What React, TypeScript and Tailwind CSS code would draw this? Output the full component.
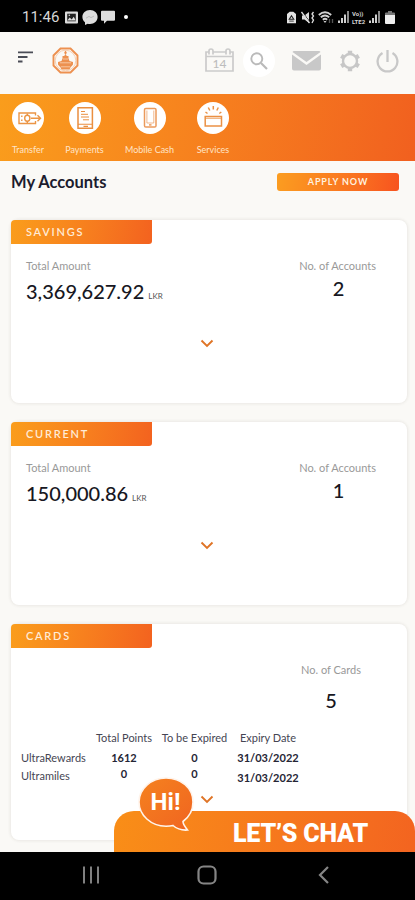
import type { ReactNode } from 'react'
import clsx from 'clsx'

const shortcuts = [
  { label: 'Transfer', width: 'w-14', icon: <TransferIcon /> },
  { label: 'Payments', width: 'w-[59px]', icon: <PaymentsIcon /> },
  { label: 'Mobile Cash', width: 'w-[69px]', icon: <MobileIcon /> },
  { label: 'Services', width: 'w-14', icon: <ServicesIcon /> },
]

const rewards = [
  { name: 'UltraRewards', points: '1612', expiring: '0', date: '31/03/2022' },
  { name: 'Ultramiles', points: '0', expiring: '0', date: '31/03/2022' },
]

function TransferIcon() {
  return (
    <svg width="32" height="32" viewBox="0 0 32 32" fill="none" stroke="#eb9545" strokeWidth="1.4">
      <path d="M23.500 13.500V11H7v10.500h16.500V19M19 16.200h9M25.500 13.200l3 3-3 3" />
      <ellipse cx="15.300" cy="16.200" rx="2.600" ry="3" />
      <path d="M15.300 11.500v1.700M15.300 19.200v1.700M9.800 13.500v1.500M9.800 17.500v1.500" />
    </svg>
  )
}

function PaymentsIcon() {
  return (
    <svg width="32" height="32" viewBox="0 0 32 32" fill="none" stroke="#ea8f40" strokeWidth="1.5">
      <path d="M9 5.700h14.400v20.600H9z" />
      <path d="M12 9.500h4M12 12.300h7M12 15h8M14 17.800h6" strokeWidth="1" />
      <path d="M9 22.300h14M14.500 24.400h4.500" strokeWidth="1.100" />
    </svg>
  )
}

function MobileIcon() {
  return (
    <svg width="32" height="32" viewBox="0 0 32 32" fill="none" stroke="#eb9a5c" strokeWidth="1.5">
      <rect x="10.500" y="6.500" width="11.500" height="18.500" rx="1.300" />
      <path d="M12.900 8.500v12.500h6.900V8.500" strokeWidth=".7" />
      <path d="M15 22.900h2.500" />
    </svg>
  )
}

function ServicesIcon() {
  return (
    <svg width="32" height="32" viewBox="0 0 32 32" fill="none" stroke="#eb9145" strokeWidth="1.5">
      <path d="M8.200 14.500h16.300v9.500H8.200z" />
      <path d="M8.200 16.300h16.300" strokeWidth=".8" />
      <path d="M8.500 10l2 1.500M11.300 5.500l1.500 3M16.300 4v3.500M21.300 5.500l-1.500 3M24.300 10l-2 1.500" />
    </svg>
  )
}

function Signal() {
  return (
    <svg width="12" height="12" viewBox="0 0 12 12" fill="#cfcfcf">
      <path d="M0 9.500h2V12H0zM3 7h2v5H3zM6 3.500h2V12H6z" />
      <path d="M9 0h2v12H9z" fill="#8c8c8c" />
    </svg>
  )
}

function StatusBar() {
  return (
    <div className="flex h-8 shrink-0 items-center bg-black pl-[22px] pr-5 pt-0.5 font-['Roboto',sans-serif] text-[#d6d6d6]">
      <span className="w-[43px] text-[15px] leading-none">11:46</span>
      <svg width="13" height="13" viewBox="0 0 13 13">
        <rect width="13" height="12" y=".5" rx="1" fill="#ddd" />
        <path d="M2.200 2.700h8.600v7.600H2.200z" fill="#222" />
        <path d="M2.200 9.500l2.500-3 2 2 2-2.800 2.100 3.800z" fill="#ddd" />
        <circle cx="4.300" cy="4.300" r=".8" fill="#ddd" />
      </svg>
      <svg className="ml-1" width="16" height="15" viewBox="0 0 16 15" fill="#ddd">
        <path d="M8 0c4.400 0 7.600 3.100 7.600 7S12.400 14 8 14c-.8 0-1.600-.1-2.300-.3L3 15v-2.700C1.400 11 .4 9.200.4 7 .4 3.100 3.600 0 8 0z" />
        <path d="M4 8.200l3-1.800 2 1.200 3-1.500" stroke="#bcbcbc" fill="none" />
      </svg>
      <svg className="ml-[3px]" width="14" height="14" viewBox="0 0 14 14" fill="#ddd">
        <path d="M1 .8h12a1 1 0 0 1 1 1v8a1 1 0 0 1-1 1H6L3 13.800v-3H1a1 1 0 0 1-1-1v-8a1 1 0 0 1 1-1z" />
      </svg>
      <span className="ml-[9px] size-1 rounded-full bg-white" />
      <svg className="ml-auto" width="9" height="13" viewBox="0 0 10 13">
        <path d="M3 0h4l3 2.500V13H0V2.500z" fill="#e2e2e2" />
        <path d="M5 4.500L7.500 8.500h-5z" fill="none" stroke="#222" strokeWidth="1.200" />
        <path d="M2.500 10.500h5" stroke="#333" />
      </svg>
      <svg className="ml-[5px]" width="14" height="13" viewBox="0 0 14 13" fill="#ddd">
        <path d="M1 4.500h2.500L8 1v11L3.500 8.500H1z" />
        <path d="M1.500 1l8 11" stroke="#000" strokeWidth="1" />
        <path d="M.5 1l8 11M12.500 1L11 3l1.500 2L11 7l1.500 2-1.500 3" stroke="#ddd" strokeWidth="1.300" fill="none" />
      </svg>
      <svg className="ml-[3px]" width="16" height="13" viewBox="0 0 16 13" fill="none" stroke="#d2d2d2" strokeWidth="1.800">
        <path d="M.8 4Q7 -1.500 13.200 4M2.800 6.300Q7 2.700 11.200 6.300M4.800 8.700Q7 6.800 9.200 8.700" />
        <path d="M7 12l-1.500-2h3z" fill="#d2d2d2" stroke="none" />
        <path d="M11.500 8v4M14.500 8v4" stroke="#555" strokeWidth="1.300" />
      </svg>
      <span className="ml-1"><Signal /></span>
      <span className="ml-0.5 flex w-[17px] flex-col gap-px whitespace-nowrap text-[6px] font-bold leading-[7px]">
        <span>Vo))</span>
        <span>LTE2</span>
      </span>
      <Signal />
      <svg className="ml-1" width="10" height="13" viewBox="0 0 10 13">
        <path d="M3 0h4v1.500h2a1 1 0 0 1 1 1V4H0V2.500a1 1 0 0 1 1-1h2z" fill="#777" />
        <path d="M0 4h10v8a1 1 0 0 1-1 1H1a1 1 0 0 1-1-1z" fill="#eee" />
      </svg>
    </div>
  )
}

function Header() {
  return (
    <header className="flex h-[62px] shrink-0 items-center pb-[5px] pl-[18px] pr-4">
      <svg className="-mt-2 mr-[19px]" width="15" height="12" viewBox="0 0 15 12" fill="#4a4d56">
        <path d="M0 .5h15v1.700H0zM0 5h9.500v1.900H0zM0 9.600h4.500v1.800H0z" />
      </svg>
      <svg width="27" height="27" viewBox="0 0 27 27" fill="#ed9150">
        <path d="M8.500 1.500h10l7 7v10l-7 7h-10l-7-7v-10z" fill="none" stroke="#ed9150" strokeWidth="1.900" />
        <circle cx="13.500" cy="13.500" r="10.300" fill="none" stroke="#f3bd94" strokeWidth=".7" />
        <path d="M13.500 3.500l1.300 2-.8 2h-1l-.8-2zM10.500 9h1.500l1.500-1.500L15 9h1.500v2.500l1 2.500 3.500 1v2.500l-1.500 2H19l-1.500 3h-8l-1.500-3h-.5l-1.500-2V15l3.500-1 1-2.500z" />
        <path d="M11 12h5M8 15.800h11M9 19.800h9" stroke="#fadcc4" strokeWidth=".7" />
      </svg>
      <svg className="ml-auto -mt-0.5" width="29" height="24" viewBox="0 0 29 24" fill="none" stroke="#cbcbcb" strokeWidth="1.700">
        <path d="M1 4h27v19H1zM1 8.500h27" />
        <path d="M4 6.500V3a2 2 0 0 1 4 0v3.500M21 6.500V3a2 2 0 0 1 4 0v3.500" fill="#faf9f6" />
        <text x="14.500" y="20" textAnchor="middle" fontSize="12" fontWeight="500" fill="#bdbdbd" stroke="none" fontFamily="Lato">14</text>
      </svg>
      <span className="ml-[9px] flex size-8 items-center justify-center rounded-full bg-white">
        <svg width="18" height="18" viewBox="0 0 18 18" fill="none" stroke="#bababa" strokeWidth="1.900">
          <circle cx="6.800" cy="6.800" r="5.500" />
          <path d="M11 11l6 6" strokeWidth="2.200" />
        </svg>
      </span>
      <svg className="ml-[17px]" width="29" height="20" viewBox="0 0 29 20" fill="#c8c8c8">
        <path d="M2 0h25a2 2 0 0 1 1.500 1L14.500 11 .5 1A2 2 0 0 1 2 0z" />
        <path d="M0 3.500l14.500 10.500L29 3.500v14a2 2 0 0 1-2 2H2a2 2 0 0 1-2-2z" />
      </svg>
      <svg className="ml-[18px]" width="22" height="24" viewBox="0 0 22 24" fill="none" stroke="#c7c7c7">
        <circle cx="11" cy="12" r="7" strokeWidth="2.400" />
        <path
          d="M11 1.800v3M11 19.200v3M2.200 6.900l2.600 1.500M17.200 15.600l2.600 1.500M2.200 17.100l2.600-1.500M17.200 8.400l2.600-1.500"
          strokeWidth="4.400"
        />
      </svg>
      <svg className="ml-[15px]" width="23" height="24" viewBox="0 0 23 24" fill="none" stroke="#c8c8c8" strokeWidth="2.300">
        <path d="M6.500 4a9.900 9.900 0 1 0 10 0M11.500 1v12" />
      </svg>
    </header>
  )
}

function Chevron() {
  return (
    <svg width="14" height="9" viewBox="0 0 14 9" fill="none" stroke="#df7426" strokeWidth="1.900">
      <path d="M1.500 1.500L7 7l5.500-5.500" />
    </svg>
  )
}

function Card({ title, className, children }: { title: string; className?: string; children: ReactNode }) {
  return (
    <section className={clsx('flex shrink-0 flex-col rounded-[8px] bg-white shadow-[0_0_3px_1px_rgba(80,70,60,0.09)]', className)}>
      <h2 className="h-6 w-[141px] rounded-br-[3px] rounded-tl-[4px] bg-linear-100 from-[#fa9d1c] to-[#f3621f] pl-[15px] text-[11px] font-semibold leading-6 tracking-[1.750px] text-[#ffebd6]">
        {title}
      </h2>
      {children}
    </section>
  )
}

function AccountCard({ title, amount, count }: { title: string; amount: string; count: number }) {
  return (
    <Card title={title} className="mb-[19px] h-[183px]">
      <div className="flex h-[92px] justify-between pl-[15px] pr-[31px] pt-[15px]">
        <div>
          <p className="text-[11px] leading-[14px] text-[#999]">Total Amount</p>
          <p className="mt-1.5 text-[20px] font-medium leading-6 text-[#171722]">
            {amount}
            <span className="ml-1 text-[8px] font-normal text-[#555]">LKR</span>
          </p>
        </div>
        <div className="text-center">
          <p className="text-[11px] leading-[14px] text-[#999]">No. of Accounts</p>
          <p className="mt-[3px] pl-0.5 text-[20px] font-medium leading-6 text-[#171722]">{count}</p>
        </div>
      </div>
      <div className="flex justify-center pr-[5px] pt-[3px]">
        <Chevron />
      </div>
    </Card>
  )
}

function CardsSummary() {
  return (
    <Card title="CARDS" className="h-[216px]">
      <div className="flex flex-col items-center self-end pr-[46px] pt-[15px] text-center">
        <p className="text-[11px] leading-[14px] text-[#999]">No. of Cards</p>
        <p className="mt-[11px] text-[20px] font-medium leading-6 text-[#171722]">5</p>
      </div>
      <div className="mt-[19px] grid grid-cols-[68px_70px_71px_76px] pl-2.5 text-center text-[11px] leading-[14px] text-[#454553]">
        <span />
        <span className="whitespace-nowrap">Total Points</span>
        <span className="whitespace-nowrap">To be Expired</span>
        <span className="whitespace-nowrap">Expiry Date</span>
      </div>
      <div className="mt-1.5 flex flex-col gap-1 pl-2.5 text-[11px] leading-[14px] text-[#454553]">
        {rewards.map(({ name, points, expiring, date }, i) => (
          <div key={name} className="grid grid-cols-[68px_70px_71px_76px] text-center">
            <span className="text-left">{name}</span>
            <span className={clsx('font-bold text-[#252535]', i === 1 && '-mt-0.5')}>{points}</span>
            <span className={clsx('font-bold text-[#252535]', i === 1 && '-mt-0.5')}>{expiring}</span>
            <span className={clsx('font-bold text-[#252535]', i === 1 && 'mt-0.5')}>{date}</span>
          </div>
        ))}
      </div>
      <div className="flex justify-center pr-[5px] pt-2.5">
        <Chevron />
      </div>
    </Card>
  )
}

function ChatBanner() {
  return (
    <div className="absolute bottom-12 left-[114px] h-[41px] w-[301px] rounded-t-[20px] bg-linear-100 from-[#f98e17] to-[#f36420] pl-[119px] pt-[9px]">
      <span className="whitespace-nowrap font-['Roboto',sans-serif] text-[25px] font-black leading-7 tracking-[-0.2px] text-white">
        LET’S CHAT
      </span>
      <div className="absolute -top-[34px] left-6 flex h-[54px] w-[57px] justify-center pr-0.5 pt-[13px]">
        <svg className="absolute inset-0" width="57" height="56" viewBox="0 0 57 56">
          <defs>
            <linearGradient id="bubble" x1="0" y1="0" x2="1" y2="1">
              <stop stopColor="#f5821f" />
              <stop offset="1" stopColor="#f06420" />
            </linearGradient>
          </defs>
          <path
            d="M28 1C43 1 55 11 55 25c0 9-4 15-10 19.500 0 3 2 5 4.500 8.500-6 .5-11-1.500-14.500-4.500-2 .5-4 .7-7 .7C13 49.200 1 38 1 25S13 1 28 1z"
            fill="url(#bubble)"
            stroke="#fff3ea"
            strokeWidth="1.600"
          />
        </svg>
        <span className="relative font-['Roboto',sans-serif] text-[24px] font-bold leading-6 text-white">Hi!</span>
      </div>
    </div>
  )
}

function NavBar() {
  return (
    <nav className="flex h-12 shrink-0 items-center bg-black pb-0.5 pl-[82px]">
      <svg width="18" height="18" viewBox="0 0 18 18" stroke="#808080" strokeWidth="2">
        <path d="M2 .5v17M9 .5v17M16 .5v17" />
      </svg>
      <svg className="ml-[97px]" width="20" height="20" viewBox="0 0 20 20" fill="none" stroke="#858585" strokeWidth="2.200">
        <rect x="1.500" y="1.500" width="17" height="17" rx="5" />
      </svg>
      <svg className="ml-[101px]" width="12" height="18" viewBox="0 0 12 18" fill="none" stroke="#858585" strokeWidth="2.200">
        <path d="M10 1L2 9l8 8" />
      </svg>
    </nav>
  )
}

export default function App() {
  return (
    <div className="relative flex h-[900px] w-[415px] flex-col overflow-hidden bg-[#faf9f6] font-['Lato',sans-serif]">
      <StatusBar />
      <Header />
      <div className="flex h-[67px] shrink-0 bg-linear-100 from-[#fa9d1c] to-[#f1601f] pt-2">
        {shortcuts.map(({ label, width, icon }, i) => (
          <div key={label} className={clsx('flex shrink-0 flex-col items-center', width, i === 1 && '-ml-px', i > 1 && 'ml-px')}>
            <span className="size-8 rounded-full bg-white">{icon}</span>
            <span className="mt-2.5 whitespace-nowrap text-[9px] leading-[11px] text-[#ffe4c8]">{label}</span>
          </div>
        ))}
      </div>
      <main className="flex min-h-0 flex-1 flex-col overflow-hidden pl-[11px] pr-2">
        <div className="mb-[18px] flex h-[41px] shrink-0 items-center justify-between pr-2">
          <h1 className="text-[16.5px] font-bold leading-5 text-[#1c1c2e]">My Accounts</h1>
          <button className="h-[18px] w-[122px] rounded-[3px] bg-linear-100 from-[#fb9d20] to-[#f7531f] text-[9px] font-bold leading-[17px] tracking-[0.9px] text-[#fff0df]">
            APPLY NOW
          </button>
        </div>
        <AccountCard title="SAVINGS" amount="3,369,627.92" count={2} />
        <AccountCard title="CURRENT" amount="150,000.86" count={1} />
        <CardsSummary />
      </main>
      <ChatBanner />
      <NavBar />
    </div>
  )
}
